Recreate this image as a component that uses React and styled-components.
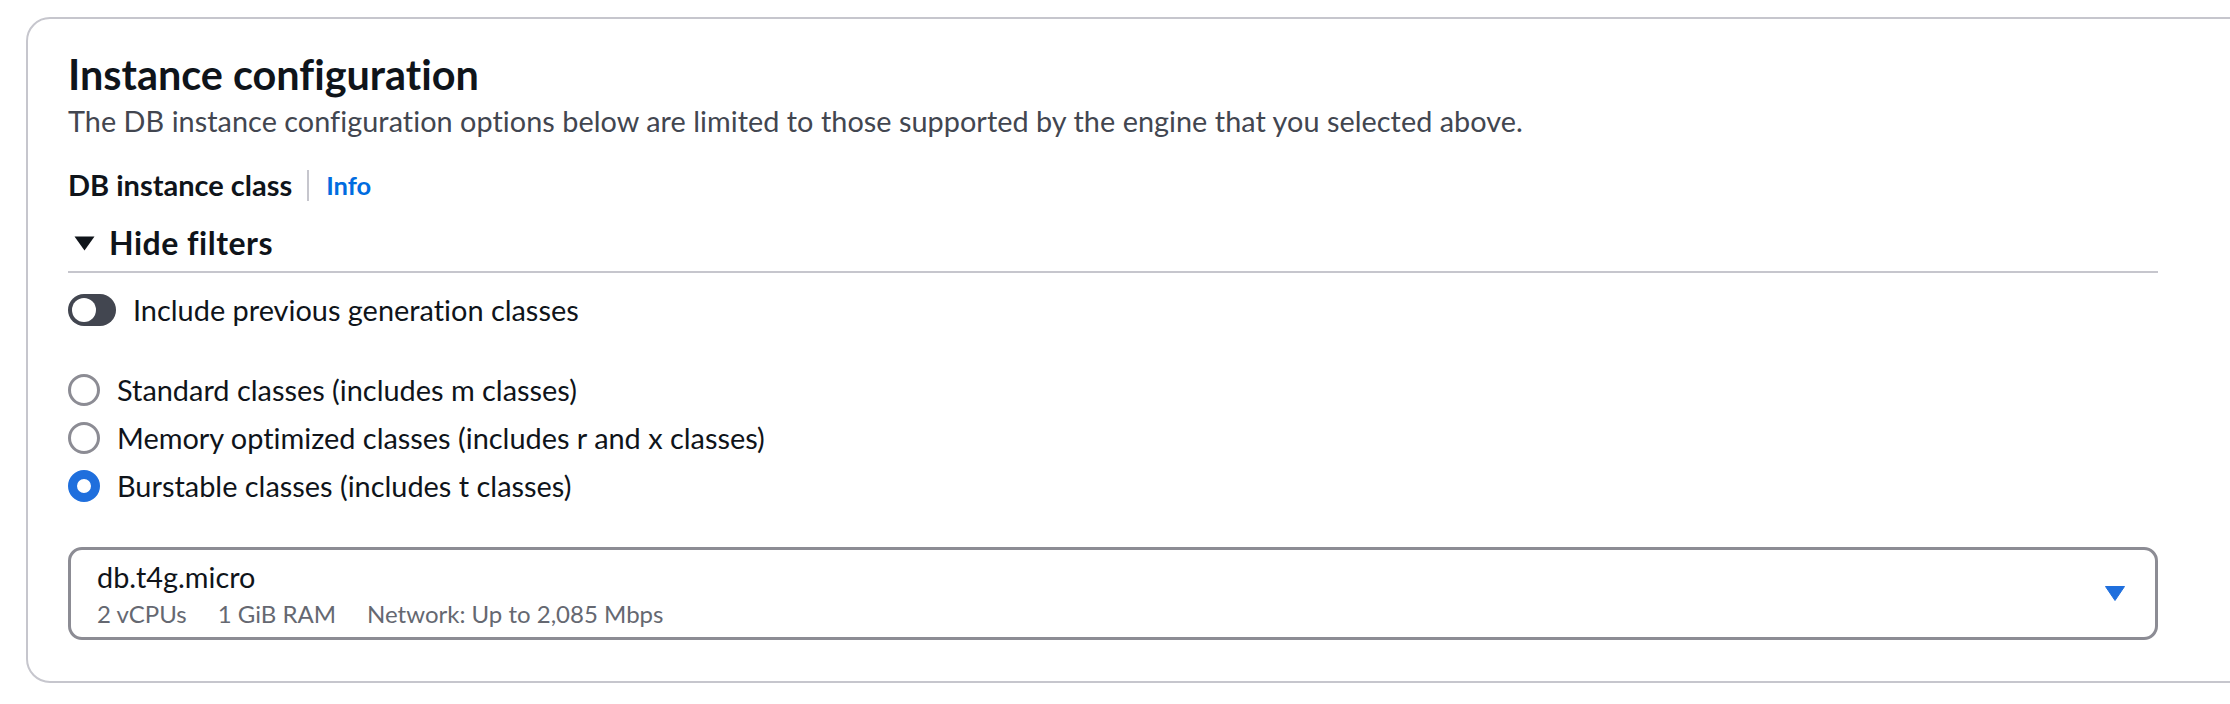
import styled, { createGlobalStyle } from "styled-components";

const Global = createGlobalStyle`
  body {
    margin: 0;
    background: #ffffff;
    font-family: "Lato", "Roboto", sans-serif;
    font-variant-ligatures: no-common-ligatures;
    color: #0f141a;
  }
`;

const Card = styled.section`
  margin: 17px -40px 0 26px;
  padding: 31px 110px 41px 40px;
  border: 2px solid #c6c6cd;
  border-radius: 24px;
  background: #ffffff;
`;

const Title = styled.h2`
  margin: 0;
  font-size: 41.4px;
  line-height: 48px;
  font-weight: 700;
  color: #0f141a;
`;

const Description = styled.p`
  margin: 3px 0 0;
  font-size: 28.8px;
  line-height: 40px;
  letter-spacing: 0.05px;
  color: #424650;
`;

const LabelRow = styled.div`
  display: flex;
  align-items: center;
  height: 40px;
  margin-top: 24px;
`;

const LabelText = styled.span`
  font-size: 29px;
  font-weight: 700;
  line-height: 40px;
`;

const Separator = styled.span`
  width: 2px;
  height: 31px;
  margin: 0 17px 0 15px;
  background: #c6c6cd;
`;

const InfoLink = styled.a`
  font-size: 25.5px;
  font-weight: 700;
  color: #006ce0;
  text-decoration: none;
  cursor: pointer;
`;

const FilterHeader = styled.div`
  display: flex;
  align-items: center;
  gap: 9px;
  margin-top: 18px;
  padding-bottom: 8px;
  border-bottom: 2px solid #c6c6cd;
`;

const IconBox = styled.span`
  display: flex;
  align-items: center;
  justify-content: center;
  width: 32px;
  height: 32px;
  flex: none;
`;

const FilterTitle = styled.span`
  font-size: 32px;
  line-height: 40px;
  font-weight: 700;
  letter-spacing: 0.5px;
`;

const ToggleRow = styled.label`
  display: flex;
  align-items: center;
  gap: 17px;
  height: 40px;
  margin-top: 17px;
`;

const Switch = styled.span`
  display: flex;
  align-items: center;
  width: 48px;
  height: 32px;
  padding: 0 4px;
  box-sizing: border-box;
  border-radius: 16px;
  background: #424650;
`;

const SwitchKnob = styled.span`
  width: 24px;
  height: 24px;
  border-radius: 50%;
  background: #ffffff;
`;

const OptionText = styled.span`
  font-size: 28.9px;
  line-height: 40px;
  color: #0f141a;
`;

const RadioGroup = styled.div`
  display: flex;
  flex-direction: column;
  gap: 8px;
  margin-top: 40px;
`;

const RadioRow = styled.label`
  display: flex;
  align-items: center;
  gap: 17px;
  height: 40px;
`;

const RadioDot = styled.span`
  width: 32px;
  height: 32px;
  box-sizing: border-box;
  border-radius: 50%;
  flex: none;
  border: ${(p) => (p.$checked ? "9px solid #1f6fdd" : "3px solid #8c8c94")};
  background: #ffffff;
`;

const Select = styled.div`
  display: flex;
  align-items: center;
  margin-top: 41px;
  padding: 7px 24px 7px 26px;
  border: 3px solid #8c8c94;
  border-radius: 14px;
`;

const SelectBody = styled.div`
  flex: 1;
  display: flex;
  flex-direction: column;
  gap: 1px;
`;

const SelectValue = styled.span`
  font-size: 28.8px;
  line-height: 40px;
  color: #0f141a;
`;

const SelectMeta = styled.div`
  display: flex;
  gap: 31px;
  font-size: 24px;
  line-height: 32px;
  color: #656871;
`;

const radios = [
  { label: "Standard classes (includes m classes)", checked: false },
  { label: "Memory optimized classes (includes r and x classes)", checked: false },
  { label: "Burstable classes (includes t classes)", checked: true },
];

export default function App() {
  return (
    <>
      <Global />
      <Card>
        <Title>Instance configuration</Title>
        <Description>
          The DB instance configuration options below are limited to those supported by the engine that you selected above.
        </Description>

        <LabelRow>
          <LabelText>DB instance class</LabelText>
          <Separator />
          <InfoLink>Info</InfoLink>
        </LabelRow>

        <FilterHeader>
          <IconBox>
            <svg width="21" height="15" viewBox="0 0 21 15">
              <path d="M0.5 0.5 H20.5 L10.5 14.5 Z" fill="#0f141a" />
            </svg>
          </IconBox>
          <FilterTitle>Hide filters</FilterTitle>
        </FilterHeader>

        <ToggleRow>
          <Switch>
            <SwitchKnob />
          </Switch>
          <OptionText>Include previous generation classes</OptionText>
        </ToggleRow>

        <RadioGroup>
          {radios.map((r) => (
            <RadioRow key={r.label}>
              <RadioDot $checked={r.checked} />
              <OptionText>{r.label}</OptionText>
            </RadioRow>
          ))}
        </RadioGroup>

        <Select>
          <SelectBody>
            <SelectValue>db.t4g.micro</SelectValue>
            <SelectMeta>
              <span>2 vCPUs</span>
              <span>1 GiB RAM</span>
              <span>Network: Up to 2,085 Mbps</span>
            </SelectMeta>
          </SelectBody>
          <IconBox>
            <svg width="20" height="15" viewBox="0 0 20 15">
              <path d="M0.5 0.5 H19.5 L10 14.5 Z" fill="#1f6fdd" strokeLinejoin="round" stroke="#1f6fdd" strokeWidth="1" />
            </svg>
          </IconBox>
        </Select>
      </Card>
    </>
  );
}
